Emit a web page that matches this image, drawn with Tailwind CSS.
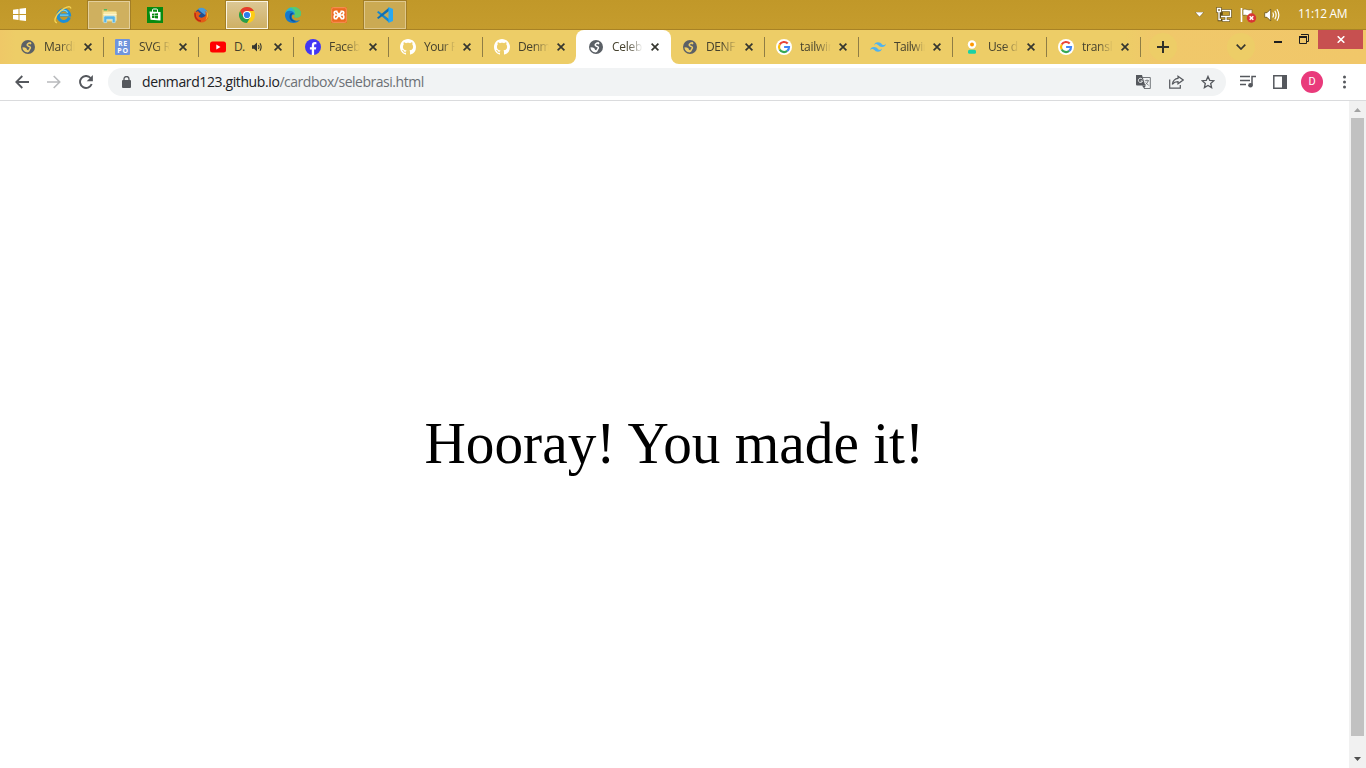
<!DOCTYPE html>
<html lang="en">
<head>
<meta charset="utf-8">
<title>Celebration</title>
<script src="https://cdn.jsdelivr.net/npm/@tailwindcss/browser@4"></script>
</head>
<body class="w-[1366px] h-[768px] overflow-hidden bg-white flex flex-col font-['Open_Sans','Noto_Sans',sans-serif]">
<svg class="hidden">
  <symbol id="x" viewBox="0 0 8 8"><path d="M.6.6l6.8 6.8M7.4.6L.6 7.4" stroke="#35362f" stroke-width="1.7" fill="none"/></symbol>
  <symbol id="globe" viewBox="0 0 16 16"><circle cx="8" cy="8" r="7" fill="#5b6066"/><path d="M10.800 3.600L8.500 4.300Q5.800 6 8.600 7.300q2.900.9 1.200 2.700L8.200 12.900" fill="none" stroke="currentColor" stroke-width="1.500"/><path d="M2.500 8.200L5 8.400q2.200.8 2 2.300l1.600.9-.6 1.900C4.500 13.300 2.400 10.800 2.500 8.200z" fill="currentColor"/><path d="M9.800 3.300l1.800.6-.9 1.600-1.400-.6z" fill="currentColor"/></symbol>
  <symbol id="gh" viewBox="0 0 16 16"><path fill="#fff" d="M8 0C3.580 0 0 3.580 0 8c0 3.540 2.290 6.530 5.470 7.590.4.070.55-.17.55-.38 0-.19-.01-.82-.01-1.490-2.010.37-2.530-.49-2.690-.94-.09-.23-.48-.94-.82-1.130-.28-.15-.68-.52-.01-.53.63-.01 1.080.58 1.230.82.72 1.210 1.870.87 2.330.66.070-.52.28-.87.51-1.070-1.780-.2-3.640-.89-3.640-3.950 0-.87.31-1.590.82-2.150-.08-.2-.36-1.020.08-2.120 0 0 .67-.21 2.200.82.640-.18 1.320-.27 2-.27s1.360.09 2 .27c1.530-1.040 2.200-.82 2.200-.82.44 1.100.16 1.920.08 2.120.51.560.82 1.270.82 2.150 0 3.070-1.870 3.750-3.650 3.950.29.25.54.73.54 1.480 0 1.070-.01 1.930-.01 2.200 0 .21.15.46.55.38A8.010 8.010 0 0016 8c0-4.420-3.580-8-8-8z"/></symbol>
  <symbol id="goog" viewBox="0 0 16 16"><circle cx="8" cy="8" r="8" fill="#fff"/><g fill="none" stroke-width="2.200"><path d="M11.700 4.600A5 5 0 003.700 5.500" stroke="#ea4335"/><path d="M3.700 5.500a5 5 0 000 5" stroke="#fbbc05"/><path d="M3.700 10.500a5 5 0 007.500 1.400" stroke="#34a853"/><path d="M8.100 8H13a5 5 0 01-1.800 3.900" stroke="#4285f4"/></g></symbol>
</svg>

<!-- Taskbar -->
<div class="h-[30px] shrink-0 flex items-start bg-linear-to-b from-[#c19829] to-[#c59c2d] border-b border-[#a88225]">
  <div class="w-[42px] h-[29px] flex items-center pl-[13px]">
    <svg width="13" height="13" viewBox="0 0 13 13" fill="#fff"><path d="M0 1.700L5.500 1v5H0zM6.500.8L13 0v6H6.500zM0 7h5.500v5L0 11.300zM6.500 7H13v6l-6.500-.8z"/></svg>
  </div>
  <div class="flex gap-[4px]">
    <div class="w-[42px] h-[29px] flex items-center justify-center">
      <svg width="18" height="18" viewBox="0 0 18 18"><path d="M15.300 11.300A5.800 5.800 0 1115.500 9H5.500" fill="none" stroke="#1d8fd8" stroke-width="3"/><path d="M14.500 9.100H6M4.800 7.200a5 5 0 019-.5" fill="none" stroke="#78d4f6" stroke-width="1.200"/><path d="M3 16.800C-1 16 1.300 9.500 6.500 5c4-3.500 10-6 10.300-2.500" fill="none" stroke="#f4d254" stroke-width="1.400"/></svg>
    </div>
    <div class="w-[42px] h-[28px] mt-px flex items-center justify-center border border-[#e3cf9b] bg-[#cfb05f] ring-1 ring-[#a27e26]">
      <svg class="mt-px" width="17" height="16" viewBox="0 0 18 16"><path d="M1 1.500h6l1.200 1.300H16V14H1z" fill="#e6ca70"/><path d="M2.500 3.500h14V13h-14z" fill="#f8e9a8"/><path d="M3 .8h3.500v1.300H3z" fill="#32b65c"/><path d="M2.500 6.500h14" stroke="#fff8d4"/><path d="M3 15V9.500q0-1.500 1.500-1.500h9q1.500 0 1.500 1.500V15h-3v-3.500H6V15z" fill="#58b4e4" stroke="#b6e1f5" stroke-width=".8"/></svg>
    </div>
    <div class="w-[42px] h-[29px] flex items-center justify-center">
      <svg width="16" height="16" viewBox="0 0 16 16"><path fill="#088a10" d="M0 0h16v16H0z"/><path d="M5.500 5V3q0-1 1-1h3q1 0 1 1v2" fill="none" stroke="#fff"/><path fill="#fff" d="M2.500 4.500l11 .5v8.500l-10-.8z"/><path fill="#088a10" d="M5 6.800l2.500-.2v2H5zM8 6.500l3-.3v2.400H8zM5 9.100h2.500v2L5 10.900zM8 9.100h3v2.400l-3-.3z"/></svg>
    </div>
    <div class="w-[42px] h-[29px] flex items-center justify-center">
      <svg width="15" height="16" viewBox="0 0 15 16"><circle cx="7.500" cy="8" r="6.600" fill="#234e8f"/><path d="M4 2c3-2.500 8-1 9.500 3.500L11 8 7 5z" fill="#4a9bd8"/><path d="M.8 3.500L2 5l2-1 1 1.500 2 .7-1.500 1.800L4.500 9C6 11.500 9.500 11 11.500 8.500c.5-2 0-3.500-1-4.500 3 1 4.500 4 3.500 7-1.500 4.500-8 6-11.500 2.500C-.4 11-.2 7 .8 3.500z" fill="#e35b16"/><path d="M12.500 3.500c2.500 3 2 7.500-1 9.500 1.300-2 1.700-5 1-9.500z" fill="#fbb51e"/><path d="M1.200 6C.5 10 3 14 7 14" fill="none" stroke="#bd2814" stroke-width="1.500"/></svg>
    </div>
    <div class="w-[42px] h-[28px] mt-px flex items-center justify-center border border-[#fbf5e2] bg-linear-to-t from-[#cfb064] to-[#dcc794] ring-1 ring-[#a27e26]">
      <svg width="16" height="16" viewBox="0 0 16 16"><circle cx="8" cy="8" r="8" fill="#fdcd17"/><path d="M1.070 4A8 8 0 0114.930 4H8L4.500 10z" fill="#e33b2e"/><path d="M1.070 4A8 8 0 008 16l3.500-6-3.500 2-3.500-2z" fill="#269d4e"/><circle cx="8" cy="8" r="4" fill="#fff"/><circle cx="8" cy="8" r="3.100" fill="#2d7de9"/></svg>
    </div>
    <div class="w-[42px] h-[29px] flex items-center justify-center">
      <svg width="16" height="16" viewBox="0 0 16 16"><path d="M0 8C0 3 4 0 8.500 0 13 0 16 3 16 6.500 16 9 14.200 10.500 12 10.500c-3 0-3-1-2.300-2C10 6 6 4 0 8z" fill="#2fb8c8"/><path d="M7 0c5-.5 9 3 9 6.500 0 2.500-1.800 4-4 4-3 0-3-1-2.300-2C10 6 11 2 5 .6z" fill="#5acb6a"/><path d="M0 8c0-6 9-5.500 9.700-.5C6 7 6 11 9 13c2 1.300 4 .8 6 0-1.500 2-4 3-6.500 3C4 16 0 13 0 8z" fill="#1679cc"/><path d="M4.500 9.500C4.500 6 7 5.500 8.500 6 4.500 8.500 6 14 11 14c-2 1.800-6.500 0-6.500-4.500z" fill="#0c4f96"/></svg>
    </div>
    <div class="w-[42px] h-[29px] flex items-center justify-center">
      <svg width="16" height="16" viewBox="0 0 16 16"><rect width="16" height="16" rx="1.500" fill="#ec6a1f"/><rect x=".7" y=".7" width="14.600" height="14.600" rx="1.500" fill="none" stroke="#f5a069" stroke-width=".8"/><path d="M6.500 4.300H4.700q-1.500 0-1.500 1.500T4.700 8H11.300q1.500 0 1.500 2t-1.500 1.700H9.800M9.500 4.300h1.800q1.500 0 1.500 1.500T11.300 8H4.700q-1.500 0-1.500 2t1.500 1.700H6.200M5.500 4.500l5 7M10.500 4.500l-5 7" fill="none" stroke="#fff" stroke-width="1.700"/></svg>
    </div>
    <div class="w-[42px] h-[28px] mt-px flex items-center justify-center border border-[#dfc88c] bg-[#cbaa53] ring-1 ring-[#a27e26]">
      <svg width="16" height="16" viewBox="0 0 16 16"><path d="M0 5.200l1.400-1.300L12 12v3.500z" fill="#1588d0"/><path d="M0 10.800l1.400 1.300L12 4V.5z" fill="#0f70b5"/><path d="M11.500 0L16 2v12l-4.500 2z" fill="#29a8f2"/></svg>
    </div>
  </div>
  <div class="ml-auto h-[29px] flex items-center text-white">
    <svg width="9" height="5" viewBox="0 0 9 5"><path d="M0 0h9L4.500 5z" fill="#fff" stroke="#6b5518" stroke-width=".5"/></svg>
    <svg class="ml-[12px]" width="16" height="15" viewBox="0 0 16 15"><g fill="none" stroke="#5c4914" stroke-width="2.600"><path d="M5.500 3.500h9v6h-9zM10 10v3.500M6 13.500h8M1.500 1.500h3v3h-3zM3 5v8h3"/></g><g fill="none" stroke="#fff" stroke-width="1.400"><path d="M6 3.500h8.500v6H5M10 10v3.500M6.500 13.500h7M1.500 1.500h3v3h-3zM3 5v7.500h2"/></g></svg>
    <svg class="ml-[8px]" width="17" height="16" viewBox="0 0 17 16"><path d="M1.500 1v14" stroke="#fff" stroke-width="1.600"/><path d="M3 2.500c3-1.500 4.500 1.500 9 0v6c-4.500 1.500-6-1.500-9 0z" fill="#fff" stroke="#715a20" stroke-width=".6"/><circle cx="11.500" cy="11" r="4.700" fill="#d93534"/><path d="M9.700 9.200l3.600 3.600M13.300 9.200l-3.600 3.600" stroke="#fff" stroke-width="1.500"/></svg>
    <svg class="ml-[7px]" width="16" height="14" viewBox="0 0 16 14"><path d="M.7 4.700H3L6.700 1v12L3 9.300H.7z" fill="#fff" stroke="#655016" stroke-width=".8"/><path d="M8.700 4.500q1.500 2.500 0 5M10.800 2.800q2.700 4.200 0 8.400M13 1.200q3.700 5.800 0 11.600" fill="none" stroke="#fff" stroke-width="1.200"/></svg>
    <span class="ml-[18px] w-[68px] text-[12px] leading-[16px] tracking-[-0.35px] whitespace-nowrap -mt-px">11:12 AM</span>
  </div>
</div>

<!-- Tab strip -->
<div class="h-[34px] shrink-0 flex items-start pl-[9px] bg-[linear-gradient(90deg,#efc867_0,#edcd67_16px,#edcd67_1125px,#f0c86a_1155px,#f1c769_1366px)] text-[#45412d] text-[12px] leading-[16px]">
  <div class="w-[95px] h-[34px] flex items-center pl-[11px]"><svg width="16" height="16" class="text-[#edcd67]"><use href="#globe"/></svg><span class="ml-[8px] w-[31px] overflow-hidden whitespace-nowrap tracking-[-0.25px] mask-r-from-50%">Mardi</span><svg class="ml-[9px]" width="8" height="8"><use href="#x"/></svg><i class="ml-auto w-px h-[20px] bg-[#8f7d45]"></i></div>
  <div class="w-[95px] h-[34px] flex items-center pl-[11px]"><span class="w-[15px] mr-px h-[16px] bg-[#7094db] rounded-[1px] text-white font-bold text-[7px] leading-[7px] text-center tracking-[0.8px] pt-px pl-px">RE<br>PO</span><span class="ml-[8px] w-[31px] overflow-hidden whitespace-nowrap tracking-[-0.25px] mask-r-from-50%">SVG R</span><svg class="ml-[9px]" width="8" height="8"><use href="#x"/></svg><i class="ml-auto w-px h-[20px] bg-[#8f7d45]"></i></div>
  <div class="w-[95px] h-[34px] flex items-center pl-[11px]"><svg width="16" height="16" viewBox="0 0 16 16"><rect y="2.500" width="16" height="11" rx="2.500" fill="#f00"/><path d="M6.300 5.600v4.800L10.500 8z" fill="#fff"/></svg><span class="ml-[8px] w-[10px] whitespace-nowrap tracking-[-0.6px]">D.</span><svg class="ml-[7px]" width="12" height="10" viewBox="0 0 12 10"><path d="M1 3.200h2L6 .6v8.800L3 6.800H1z" fill="#35362f"/><path d="M7.500 3q1.200 2 0 4M9 1.300q2.300 3.700 0 7.400" fill="none" stroke="#35362f" stroke-width="1.100"/></svg><svg class="ml-[11px]" width="8" height="8"><use href="#x"/></svg><i class="ml-auto w-px h-[20px] bg-[#8f7d45]"></i></div>
  <div class="w-[95px] h-[34px] flex items-center pl-[11px]"><svg width="16" height="16" viewBox="0 0 16 16"><circle cx="8" cy="8" r="8" fill="#4237f3"/><path d="M6.800 15.900v-5.400H4.900V8.200h1.900V6.800c0-2.700 1.200-3.700 3.200-3.700.6 0 1 .1 1.400.2v2h-1c-1 0-1.300.5-1.300 1.400v1.500h2.200l-.4 2.300H9.100v5.400z" fill="#fff"/></svg><span class="ml-[8px] w-[31px] overflow-hidden whitespace-nowrap tracking-[-0.25px] mask-r-from-50%">Faceb</span><svg class="ml-[9px]" width="8" height="8"><use href="#x"/></svg><i class="ml-auto w-px h-[20px] bg-[#8f7d45]"></i></div>
  <div class="w-[94px] h-[34px] flex items-center pl-[11px]"><svg width="16" height="16"><use href="#gh"/></svg><span class="ml-[8px] w-[31px] overflow-hidden whitespace-nowrap tracking-[-0.5px] mask-r-from-60%">Your F</span><svg class="ml-[8px]" width="8" height="8"><use href="#x"/></svg><i class="ml-auto w-px h-[20px] bg-[#8f7d45]"></i></div>
  <div class="w-[93px] h-[34px] flex items-center pl-[11px]"><svg width="16" height="16"><use href="#gh"/></svg><span class="ml-[8px] w-[31px] overflow-hidden whitespace-nowrap tracking-[-0.4px] mask-r-from-50%">Denm</span><svg class="ml-[8px]" width="8" height="8"><use href="#x"/></svg></div>
  <div class="relative w-[95px] h-[34px] flex items-center pl-[12px] bg-white rounded-t-[8px]">
    <svg class="absolute -left-[8px] bottom-0" width="8" height="8"><path d="M8 0v8H0a8 8 0 008-8z" fill="#fff"/></svg>
    <svg class="absolute -right-[8px] bottom-0" width="8" height="8"><path d="M0 0v8h8a8 8 0 01-8-8z" fill="#fff"/></svg>
    <svg width="16" height="16" class="text-white"><use href="#globe"/></svg><span class="ml-[8px] w-[31px] overflow-hidden whitespace-nowrap tracking-[-0.25px] mask-r-from-50%">Celeb</span><svg class="ml-[8px]" width="8" height="8"><use href="#x"/></svg></div>
  <div class="w-[94px] h-[34px] flex items-center pl-[11px]"><svg width="16" height="16" class="text-[#edcd67]"><use href="#globe"/></svg><span class="ml-[8px] w-[31px] overflow-hidden whitespace-nowrap tracking-[-0.4px] mask-r-from-50%">DENF</span><svg class="ml-[8px]" width="8" height="8"><use href="#x"/></svg><i class="ml-auto w-px h-[20px] bg-[#8f7d45]"></i></div>
  <div class="w-[94px] h-[34px] flex items-center pl-[11px]"><svg width="16" height="16"><use href="#goog"/></svg><span class="ml-[8px] w-[31px] overflow-hidden whitespace-nowrap tracking-[-0.25px] mask-r-from-50%">tailwin</span><svg class="ml-[8px]" width="8" height="8"><use href="#x"/></svg><i class="ml-auto w-px h-[20px] bg-[#8f7d45]"></i></div>
  <div class="w-[94px] h-[34px] flex items-center pl-[11px]"><svg width="16" height="16" viewBox="0 0 24 24"><path fill="#50b3f0" d="M12 4.800c-3.200 0-5.200 1.600-6 4.800 1.200-1.600 2.600-2.200 4.200-1.800.91.230 1.570.89 2.290 1.620C13.660 10.600 15.030 12 18 12c3.200 0 5.200-1.600 6-4.800-1.200 1.600-2.600 2.200-4.200 1.800-.91-.23-1.570-.89-2.290-1.620C16.340 6.200 14.970 4.800 12 4.800zM6 12c-3.200 0-5.200 1.600-6 4.800 1.200-1.600 2.600-2.200 4.200-1.800.91.230 1.570.89 2.290 1.620C7.660 17.800 9.030 19.200 12 19.200c3.200 0 5.200-1.600 6-4.800-1.200 1.600-2.600 2.200-4.200 1.800-.91-.23-1.570-.89-2.290-1.620C10.340 13.400 8.970 12 6 12z"/></svg><span class="ml-[8px] w-[31px] overflow-hidden whitespace-nowrap tracking-[-0.5px] mask-r-from-60%">Tailwin</span><svg class="ml-[8px]" width="8" height="8"><use href="#x"/></svg><i class="ml-auto w-px h-[20px] bg-[#8f7d45]"></i></div>
  <div class="w-[94px] h-[34px] flex items-center pl-[11px]"><svg width="16" height="16" viewBox="0 0 16 16"><circle cx="8" cy="5.500" r="4.200" fill="#fff"/><circle cx="8" cy="5.500" r="2" fill="#ff9903"/><rect x="4" y="10.800" width="8" height="4" rx="1.500" fill="#1ad1a5"/></svg><span class="ml-[8px] w-[31px] overflow-hidden whitespace-nowrap tracking-[-0.4px] mask-r-from-50%">Use d</span><svg class="ml-[8px]" width="8" height="8"><use href="#x"/></svg><i class="ml-auto w-px h-[20px] bg-[#8f7d45]"></i></div>
  <div class="w-[94px] h-[34px] flex items-center pl-[11px]"><svg width="16" height="16"><use href="#goog"/></svg><span class="ml-[8px] w-[31px] overflow-hidden whitespace-nowrap tracking-[-0.25px] mask-r-from-50%">transl</span><svg class="ml-[8px]" width="8" height="8"><use href="#x"/></svg><i class="ml-auto w-px h-[20px] bg-[#8f7d45]"></i></div>
  <div class="w-[28px] h-[28px] mt-[3px] ml-[8px] rounded-full bg-[#edcd67] flex items-center justify-center"><svg width="12" height="12" viewBox="0 0 12 12"><path d="M6 0v12M0 6h12" stroke="#2f3029" stroke-width="2"/></svg></div>
  <div class="w-[28px] h-[28px] mt-[3px] ml-[50px] rounded-full bg-[#edcd67] flex items-center justify-center"><svg width="10" height="6" viewBox="0 0 10 6"><path d="M.7.700L5 5 9.300.7" fill="none" stroke="#35362f" stroke-width="1.700"/></svg></div>
  <svg class="ml-[19px] mt-[11px]" width="8" height="2"><path d="M0 0h8v2H0z" fill="#1e1e1e"/></svg>
  <svg class="ml-[17px] mt-[4px]" width="11" height="11" viewBox="0 0 11 11"><path d="M.5 3h7v6.500h-7zM2 .5h7.500v7h-2" fill="none" stroke="#1e1e1e"/><path d="M0 3h8" stroke="#1e1e1e" stroke-width="2"/></svg>
  <div class="ml-[8px] w-[45px] h-[19px] bg-[#c75050] flex items-center justify-center"><svg width="8" height="7" viewBox="0 0 8 7"><path d="M.7.300l6.600 6.400M7.300.3L.7 6.700" stroke="#fff" stroke-width="1.600"/></svg></div>
</div>

<!-- Toolbar -->
<div class="h-[37px] shrink-0 flex items-center pb-px bg-white border-b border-[#dadbdd] text-[#6c7075]">
  <svg class="ml-[15px]" width="14" height="14" viewBox="0 0 14 14"><path d="M14 7H1.500M7.300 1L1.300 7l6 6" fill="none" stroke="#55585d" stroke-width="1.800"/></svg>
  <svg class="ml-[18px]" width="14" height="14" viewBox="0 0 14 14"><path d="M0 7h12.500M6.700 1l6 6-6 6" fill="none" stroke="#b9bbbd" stroke-width="1.600"/></svg>
  <svg class="ml-[18px]" width="14" height="14" viewBox="0 0 14 14"><path d="M11.600 3A6 6 0 1012.700 9" fill="none" stroke="#55585d" stroke-width="1.900"/><path d="M13.900 0v6.200H7.700z" fill="#55585d"/></svg>
  <div class="ml-[15px] w-[1118px] h-[28px] rounded-full bg-[#f1f3f4] flex items-center">
    <svg class="ml-[14px]" width="9" height="12" viewBox="0 0 9 12"><rect y="4" width="9" height="8" rx="1" fill="#55585d"/><path d="M2 4.500V3a2.500 2.500 0 015 0v1.500" fill="none" stroke="#55585d" stroke-width="1.300"/></svg>
    <span class="ml-[11px] w-[300px] text-[14px] leading-[20px] tracking-[-0.48px] whitespace-nowrap"><span class="text-[#202124] tracking-[-0.39px]">denmard123.github.io</span>/cardbox/selebrasi.html</span>
    <svg class="ml-auto" width="15" height="14" viewBox="0 0 15 14"><path d="M6.500 2.500h7.800v11H8" fill="#f1f3f4" stroke="#74777b" stroke-width="1"/><path d="M0 0h6l3.300 10.500H1q-1 0-1-1z" fill="#55585d"/><path d="M6 10.500h4L8 13.500z" fill="#55585d"/><path d="M6.300 4.300A2.100 2.100 0 106.500 6H4.600" fill="none" stroke="#f1f3f4"/><path d="M8.800 5.700H13M11 4.500v1.200M12.300 5.700q-.8 2.500-3 4M9.700 7.500l3 3" fill="none" stroke="#74777b" stroke-width=".9"/></svg>
    <svg class="ml-[18px]" width="15" height="14" viewBox="0 0 15 14"><path d="M.7 4.500v8.700h10.600V10" fill="none" stroke="#55585d" stroke-width="1.200"/><path d="M9 1.200L14.200 5 9 8.800V6.700C6.500 6.700 4.700 7.500 3.300 9.300 3.800 6.500 5.500 3.800 9 3.400z" fill="none" stroke="#55585d" stroke-width="1.200"/></svg>
    <svg class="ml-[17px] mr-[11px]" width="14" height="14" viewBox="0 0 14 14"><path d="M7 1.400l1.700 3.900 4.200.4-3.200 2.800.9 4.100L7 10.400l-3.600 2.200.9-4.100L1.100 5.700l4.200-.4z" fill="none" stroke="#55585d" stroke-width="1.300"/></svg>
  </div>
  <svg class="ml-[14px]" width="16" height="13" viewBox="0 0 16 13"><path d="M0 1.500h10M0 5.500h10M0 9.500h6M12 10V1.500h4" fill="none" stroke="#55585d" stroke-width="1.500"/><circle cx="10.500" cy="10.300" r="2.300" fill="#55585d"/></svg>
  <svg class="ml-[17px]" width="14" height="14" viewBox="0 0 14 14"><path d="M.8.800h12.400v12.400H.8z" fill="none" stroke="#55585d" stroke-width="1.500"/><path d="M9 0h5v14H9z" fill="#55585d"/></svg>
  <div class="ml-[14px] w-[22px] h-[22px] rounded-full bg-[#e93a7b] flex items-center justify-center text-white text-[11px] leading-[22px] font-[Roboto,sans-serif]">D</div>
  <svg class="ml-[19px]" width="5" height="14" viewBox="0 0 5 14" fill="#55585d"><circle cx="2.500" cy="2" r="1.500"/><circle cx="2.500" cy="7" r="1.500"/><circle cx="2.500" cy="12" r="1.500"/></svg>
</div>

<!-- Page -->
<div class="flex-1 flex min-h-0">
  <main class="flex-1 flex items-center justify-center bg-white">
    <h1 class="font-['Liberation_Serif',serif] text-[59px] leading-[72px] text-black whitespace-nowrap mt-[17px] scale-x-[0.971]">Hooray! You made it!</h1>
  </main>
  <div class="w-[17px] flex flex-col items-center bg-[#f1f1f1]">
    <div class="h-[17px] flex items-center justify-center"><svg width="7" height="4"><path d="M0 4L3.500 0 7 4z" fill="#a3a3a3"/></svg></div>
    <div class="w-[13px] h-[618px] bg-[#c1c1c1]"></div>
    <svg class="mt-[21px]" width="7" height="4"><path d="M0 0h7L3.500 4z" fill="#505050"/></svg>
  </div>
</div>
</body>
</html>
